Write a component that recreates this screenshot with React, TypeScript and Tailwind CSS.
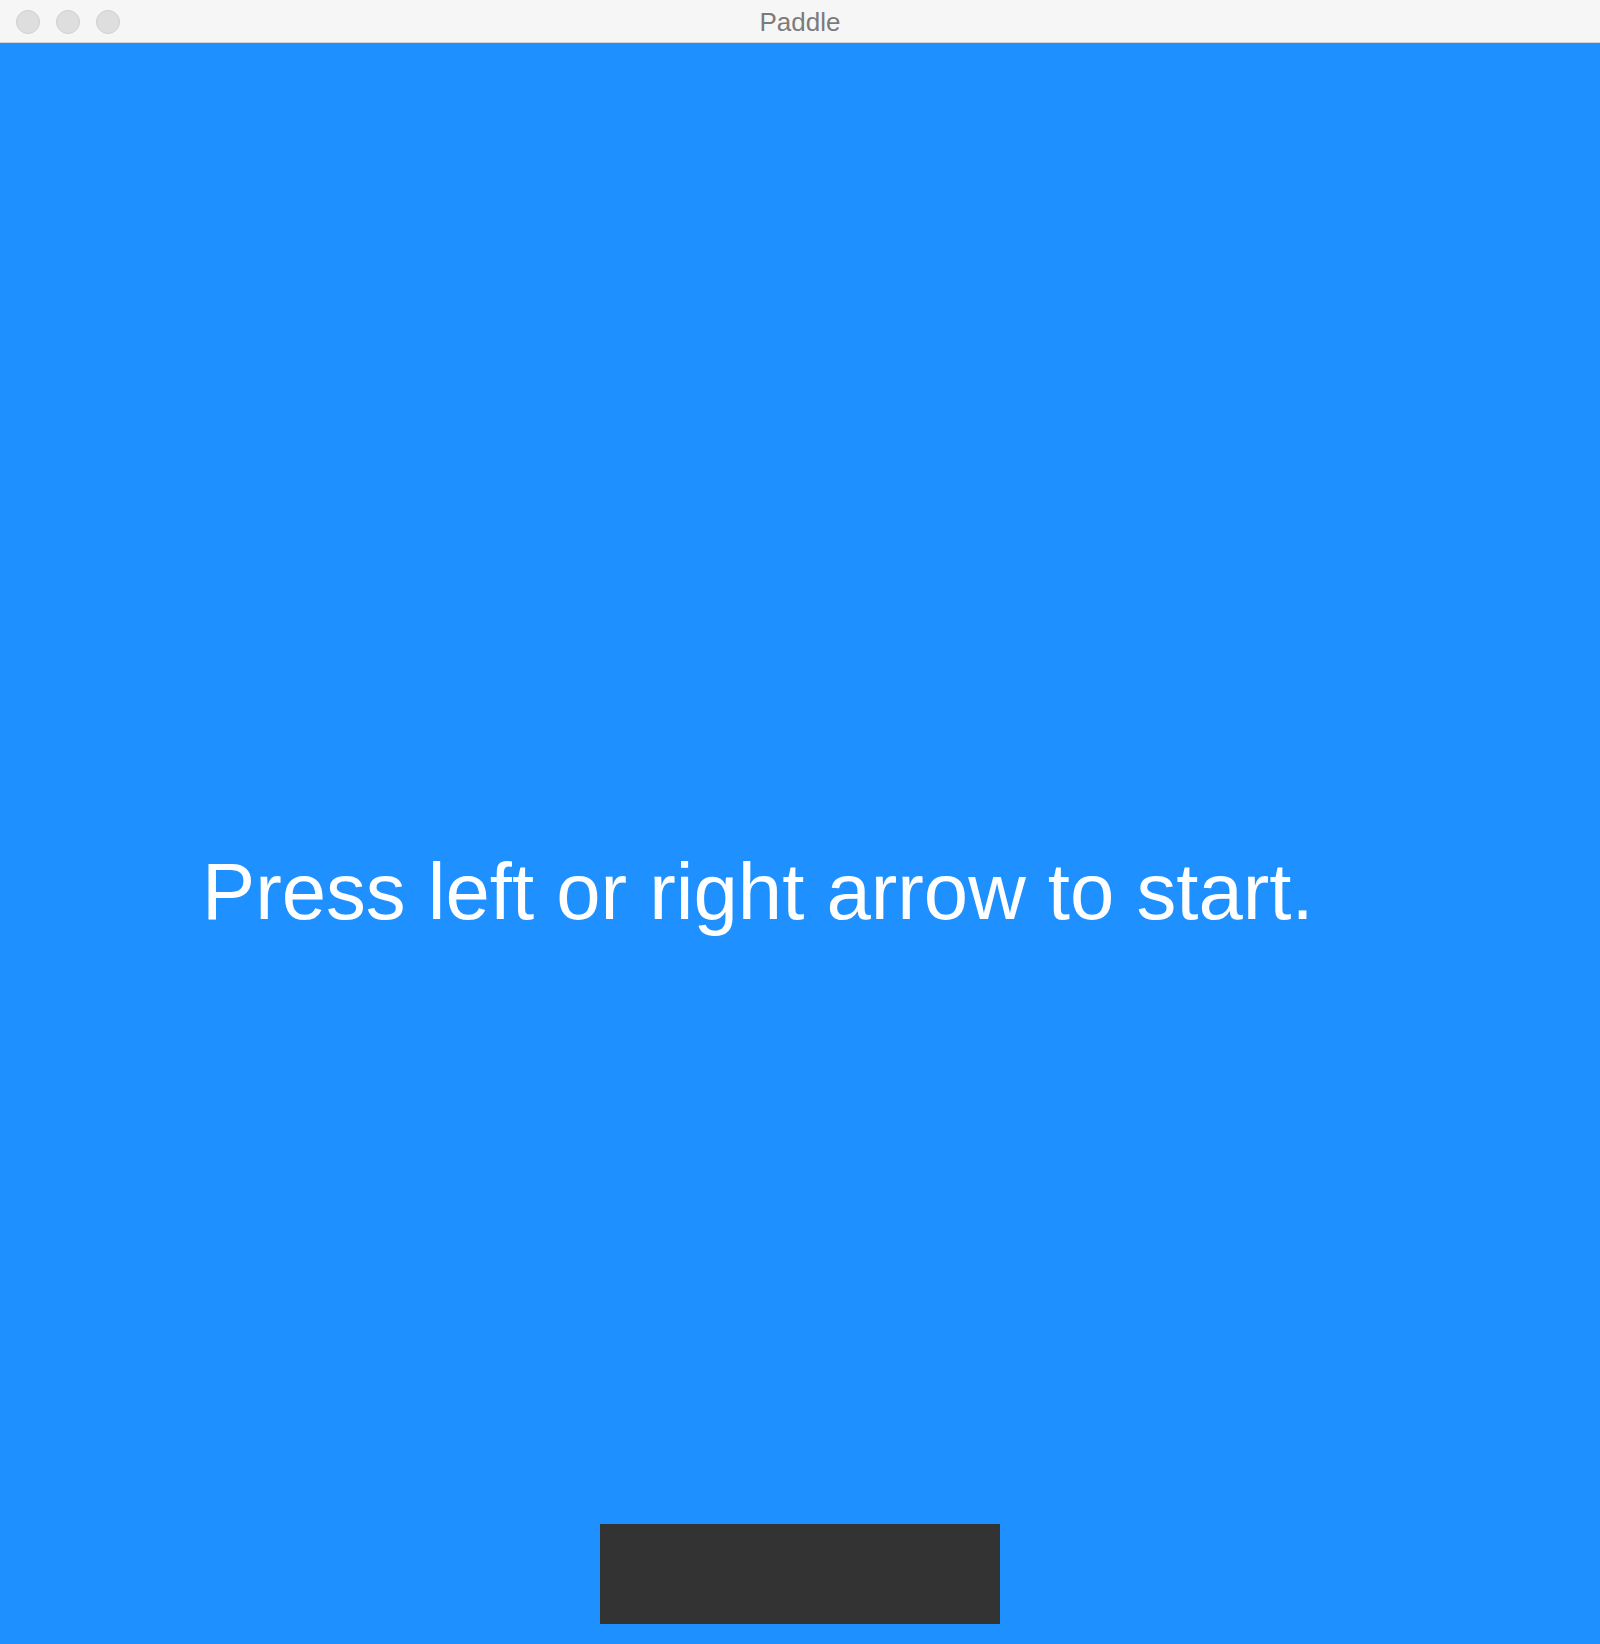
import React from 'react';

export default function App() {
  return (
    <div className="flex h-[1644px] w-full flex-col overflow-hidden bg-[#1e90ff] font-['Liberation_Sans',Arial,sans-serif]">
      {/* Window title bar */}
      <div className="relative flex h-[43px] shrink-0 items-center justify-center border-b border-[#d3d3d3] bg-[#f6f6f6]">
        <div className="absolute left-[16px] top-[10px] flex gap-[16px]">
          <span className="h-[24px] w-[24px] rounded-full border border-[#d0d0d0] bg-[#dedede]" />
          <span className="h-[24px] w-[24px] rounded-full border border-[#d0d0d0] bg-[#dedede]" />
          <span className="h-[24px] w-[24px] rounded-full border border-[#d0d0d0] bg-[#dedede]" />
        </div>
        <span className="pt-[2px] text-[26px] leading-none text-[#7b7b7b]">Paddle</span>
      </div>

      {/* Game area */}
      <div className="flex flex-1 flex-col">
        <div className="pl-[202px] pt-[809px] text-[79.7px] leading-none whitespace-nowrap text-white">
          Press left or right arrow to start.
        </div>
        <div className="mt-auto flex justify-center pb-[20px]">
          <div className="h-[100px] w-[400px] bg-[#333333]" />
        </div>
      </div>
    </div>
  );
}
